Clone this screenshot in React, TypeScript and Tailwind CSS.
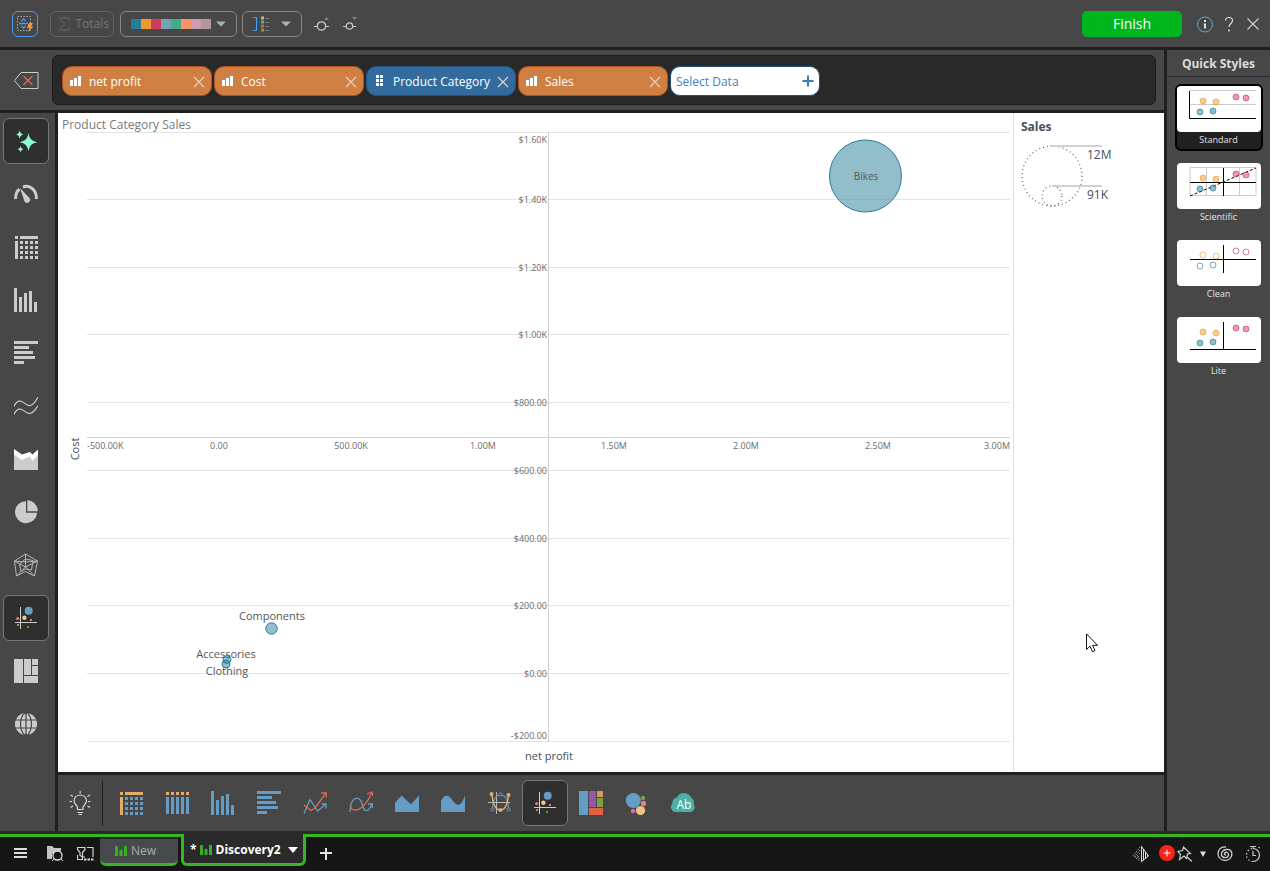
import { useState, type ReactNode } from "react"

const LIGHT = "#cccccc"
const BLUE = "#669dc4"
const ORANGE = "#e3ae6b"

const PALETTE = ["#267e99", "#eb9b30", "#d03b5f", "#75a5b3", "#45aa86", "#f79466", "#cb9cb3", "#b09896"]

type Rect = [number, number, number, number]

function Icon({ children }: { children: ReactNode }) {
  return (
    <svg viewBox="0 0 24 24" className="size-6 shrink-0" fill="none" aria-hidden="true">
      {children}
    </svg>
  )
}

function Rects({ items, fill }: { items: Rect[]; fill: string }) {
  return (
    <>
      {items.map(([x, y, w, h]) => (
        <rect key={`${x}-${y}`} x={x} y={y} width={w} height={h} fill={fill} />
      ))}
    </>
  )
}

const steps = [6, 11, 16, 21]
const gridDots: Rect[] = steps.flatMap((x) => steps.map((y): Rect => [x, y, 3, 3]))
const gridHeads: Rect[] = [
  [1, 1, 3, 3],
  [6, 1, 18, 3],
  [1, 6, 3, 18]
]
const columnBars: Rect[] = [
  [0, 0, 3, 24],
  [5, 9, 3, 15],
  [10, 5, 3, 19],
  [15, 3, 3, 21],
  [20, 14, 3, 10]
]
const rowBars: Rect[] = [
  [0, 0, 24, 3],
  [0, 5, 15, 3],
  [0, 10, 19, 3],
  [0, 15, 21, 3],
  [0, 20, 10, 3]
]

function GridIcon({ head = LIGHT, dots = LIGHT }: { head?: string; dots?: string }) {
  return (
    <Icon>
      <Rects items={gridHeads} fill={head} />
      <Rects items={gridDots} fill={dots} />
    </Icon>
  )
}

function ScatterIcon() {
  return (
    <Icon>
      <path d="M6.5 1v22M1 16.5h22" stroke={LIGHT} />
      <circle cx="14.7" cy="4.7" r="4" fill={BLUE} />
      <circle cx="10.4" cy="11.7" r="2.2" fill="#eccb7c" />
      <circle cx="3.7" cy="12.5" r="1.6" fill="#e57e74" />
      <rect x="16" y="13" width="2" height="2" fill="#e57e74" />
      <rect x="3" y="18" width="2" height="2" fill="#c58a3c" />
      <rect x="13" y="20" width="2" height="2" fill="#6c9140" />
    </Icon>
  )
}

function TreemapIcon({ colors }: { colors: string[] }) {
  return (
    <Icon>
      <rect width="9" height="24" fill={colors[0]} />
      <rect x="10" width="7" height="16" fill={colors[1]} />
      <rect x="18" width="6" height="6" fill={colors[2]} />
      <rect x="18" y="7" width="6" height="9" fill={colors[3]} />
      <rect x="10" y="17" width="14" height="7" fill={colors[4]} />
    </Icon>
  )
}

const sideTools: { name: string; icon: ReactNode }[] = [
  {
    name: "Smart visual",
    icon: (
      <Icon>
        <g fill="#8dffcf">
          <path d="M14.5 4C15.6 9.8 17.4 12 23.5 13.2C17.4 14.4 15.6 16.5 14.5 22.3C13.4 16.5 11.5 14.4 5.5 13.2C11.5 12 13.4 9.8 14.5 4Z" />
          <path d="M5.7 1.3C6.3 4 7 4.8 9.5 5.5C7 6.2 6.3 7 5.7 9.5C5.1 7 4.4 6.2 2 5.5C4.4 4.8 5.1 4 5.7 1.3Z" />
          <path d="M6.5 17C7 19 7.6 19.7 9.5 20.2C7.6 20.7 7 21.4 6.5 23.5C6 21.4 5.4 20.7 3.5 20.2C5.4 19.7 6 19 6.5 17Z" />
        </g>
      </Icon>
    )
  },
  {
    name: "Gauge",
    icon: (
      <Icon>
        <path d="M1.5 17C1.5 12 3 9 5.5 7.3M9 5C16 2.5 22.5 8 22.5 17" stroke={LIGHT} strokeWidth="3" />
        <path d="M6 6L15.5 16A3 3 0 1 1 10.5 19.5Z" fill={LIGHT} />
      </Icon>
    )
  },
  { name: "Grid", icon: <GridIcon /> },
  {
    name: "Column chart",
    icon: (
      <Icon>
        <Rects items={columnBars} fill={LIGHT} />
      </Icon>
    )
  },
  {
    name: "Bar chart",
    icon: (
      <Icon>
        <Rects items={rowBars} fill={LIGHT} />
      </Icon>
    )
  },
  {
    name: "Line chart",
    icon: (
      <Icon>
        <path
          d="M0 12.5C2 8 4 6.5 7 7.3C11 8.5 12.5 12 16 11.5C20 11 21.5 7 24 3.3M0 20.5C2 16 4 14.5 7 15.3C11 16.5 12.5 20 16 19.5C20 19 21.5 15 24 11.8"
          stroke={LIGHT}
          strokeWidth="1.2"
        />
      </Icon>
    )
  },
  {
    name: "Area chart",
    icon: (
      <Icon>
        <path d="M0 5L8 11L16 8L18 12L24 6V23H0Z" fill={LIGHT} />
        <path d="M0 2L8 7.5L16 5L18.5 7.5L24 2.5V8L18.3 14L16 9.5L8 13L0 7.5Z" fill="#fff" />
      </Icon>
    )
  },
  {
    name: "Pie chart",
    icon: (
      <Icon>
        <path d="M12 1.2A11 11 0 1 0 23 12.7H12Z" fill={LIGHT} />
        <path d="M13.3 0.3A10.8 10.8 0 0 1 23.8 11.3H13.3Z" fill={LIGHT} />
      </Icon>
    )
  },
  {
    name: "Radar chart",
    icon: (
      <Icon>
        <g stroke="#b5b5b5" strokeWidth="1">
          <path d="M11.5 1L23.5 8L20.5 23L11.5 18.5L2.5 23L0.5 8Z" />
          <path d="M11.5 6L19 7.5L17.5 17L11.5 16L7 18.5L5.5 11Z" />
          <path d="M11.5 1V14L23.5 8M11.5 14L20.5 23M11.5 14L2.5 23M11.5 14L0.5 8M0.5 8L11.5 9L23.5 8" />
        </g>
      </Icon>
    )
  },
  { name: "Scatter chart", icon: <ScatterIcon /> },
  { name: "Treemap", icon: <TreemapIcon colors={[LIGHT, LIGHT, LIGHT, LIGHT, LIGHT]} /> },
  {
    name: "Map",
    icon: (
      <Icon>
        <circle cx="12" cy="12" r="11" fill={LIGHT} />
        <g stroke="#474747" strokeWidth="1.2">
          <ellipse cx="12" cy="12" rx="5.5" ry="11" />
          <path d="M12 1V23M1 8H23M1 16H23" />
        </g>
      </Icon>
    )
  }
]

const visualTools: { name: string; icon: ReactNode }[] = [
  { name: "Matrix grid", icon: <GridIcon head={ORANGE} dots={BLUE} /> },
  {
    name: "Table",
    icon: (
      <Icon>
        <Rects items={[1, 6, 11, 16, 21].map((x): Rect => [x, 1, 3, 3])} fill={ORANGE} />
        <Rects items={[1, 6, 11, 16, 21].map((x): Rect => [x, 6, 3, 17])} fill={BLUE} />
      </Icon>
    )
  },
  {
    name: "Columns",
    icon: (
      <Icon>
        <Rects items={columnBars} fill={BLUE} />
      </Icon>
    )
  },
  {
    name: "Bars",
    icon: (
      <Icon>
        <Rects items={rowBars} fill={BLUE} />
      </Icon>
    )
  },
  {
    name: "Lines",
    icon: (
      <Icon>
        <path d="M1 22.5L7 8.5L14.5 20L23 13M18.5 13H23V17.5" stroke={BLUE} strokeWidth="1.3" />
        <path d="M1 14L8 19.5L12 17L23 2M18 2H23.3V6.5" stroke="#dd6c55" strokeWidth="1.3" />
      </Icon>
    )
  },
  {
    name: "Splines",
    icon: (
      <Icon>
        <path d="M1 21C1 5 11 4 13 12.5C15 22 19 22 23 13M19 13H23.3V17" stroke={BLUE} strokeWidth="1.3" />
        <path d="M2 15C1 20 9 20 12 17C17 13 20 8 23 1.5M18 3L23 1L24 5" stroke="#dd6c55" strokeWidth="1.3" />
      </Icon>
    )
  },
  {
    name: "Area",
    icon: (
      <Icon>
        <path d="M0 12L6.5 4.5L16 13.5L24 4.5V21H0Z" fill={BLUE} />
      </Icon>
    )
  },
  {
    name: "Spline area",
    icon: (
      <Icon>
        <path d="M0 10C3 3.5 7 3 10.5 8C14 13.5 18 16 21 11C22.3 9 23 6.5 24 4.5V21H0Z" fill={BLUE} />
      </Icon>
    )
  },
  {
    name: "Point chart",
    icon: (
      <Icon>
        <path d="M9.5 1V23M1 11.5H23" stroke="#b8b8b8" />
        <path d="M5.5 18C6 9 9 4 13.5 4C18 4 21 9 21.5 18" stroke={BLUE} strokeWidth="1.2" />
        <path d="M5 4C6 13 9 19 13.5 19C18 19 20.5 13 21.5 4" stroke={ORANGE} strokeWidth="1.5" />
        <g fill={ORANGE}>
          <circle cx="4.5" cy="3" r="2" />
          <circle cx="13.5" cy="19" r="2" />
          <circle cx="21.5" cy="4" r="2" />
        </g>
        <g stroke={BLUE} fill="#474747">
          <circle cx="13.5" cy="3.5" r="1.6" />
          <circle cx="5.5" cy="18.5" r="1.6" />
          <circle cx="21.5" cy="18.5" r="1.6" />
        </g>
      </Icon>
    )
  },
  { name: "Scatter", icon: <ScatterIcon /> },
  { name: "Tree", icon: <TreemapIcon colors={[BLUE, "#9559a3", "#d29c54", "#7ca044", "#e4603f"]} /> },
  {
    name: "Packed bubbles",
    icon: (
      <Icon>
        <circle cx="8.3" cy="9.5" r="7.5" fill={BLUE} />
        <circle cx="18" cy="7" r="2.2" fill="#7ca044" />
        <circle cx="18.5" cy="12.5" r="2.7" fill="#e8836f" />
        <circle cx="15.5" cy="19.5" r="4.6" fill="#ebc588" />
        <circle cx="8" cy="20" r="2.2" fill="#dd68bd" />
      </Icon>
    )
  },
  {
    name: "Word cloud",
    icon: (
      <Icon>
        <path d="M4 21A5 5 0 0 1 1.5 12.5A5 5 0 0 1 6 6.5A8 8 0 0 1 20.5 7A5 5 0 0 1 22.5 13A5 5 0 0 1 20 21Z" fill="#4bb1a6" />
        <text x="13" y="18" textAnchor="middle" fontSize="12" fill="#fff">
          Ab
        </text>
      </Icon>
    )
  }
]

const chips = [
  { label: "net profit", measure: true },
  { label: "Cost", measure: true },
  { label: "Product Category", measure: false },
  { label: "Sales", measure: true }
]

function Chip({ label, measure }: { label: string; measure: boolean }) {
  return (
    <div
      className={`flex h-[30px] w-[150px] items-center rounded-[10px] border pr-[5px] pl-[7px] text-white ${
        measure ? "border-[#b4501f] bg-[#d07f43]" : "border-[#24527c] bg-[#346b9e]"
      }`}
    >
      <svg viewBox="0 0 12 12" className="size-3 shrink-0" fill="#fff" aria-hidden="true">
        {measure ? (
          <path d="M0 5h3v6H0zM4 3h3v8H4zM8 1h3v10H8z" />
        ) : (
          <path d="M2 0h3v3H2zM6 0h3v3H6zM2 4h3v3H2zM6 4h3v3H6zM2 8h3v3H2zM6 8h3v3H6z" />
        )}
      </svg>
      <span className="ml-[7px] flex-1 pt-0.5 whitespace-nowrap">{label}</span>
      <button type="button" aria-label={`Remove ${label}`} className="flex">
        <svg viewBox="0 0 14 14" className="size-3.5" stroke="#e6cfc0" strokeWidth="1.2" aria-hidden="true">
          <path d="M2 3l10 10M12 3L2 13" />
        </svg>
      </button>
    </div>
  )
}

function TopBar() {
  return (
    <header className="flex h-[50px] items-center border-b-3 border-[#202020] px-3">
      <button
        type="button"
        aria-label="Auto update"
        className="flex size-[26px] items-center justify-center rounded-md border border-[#4f9be8]"
      >
        <svg viewBox="0 0 18 18" className="size-[18px]" fill="none" aria-hidden="true">
          <rect x="1.5" y="1.5" width="13" height="14" stroke="#aaa" strokeDasharray="1.5 1.5" />
          <path d="M3 8.500h9M5.500 6L7.500 4L9.500 6M5.500 11L7.500 13L9.500 11" stroke="#4f9be8" strokeWidth="1.3" />
          <path d="M13 8h4l-2 3.500h2.500L12 17l1.500-4H11z" fill="#f5a02c" />
        </svg>
      </button>
      <button
        type="button"
        disabled
        className="ml-3 flex h-[26px] w-16 items-center justify-between rounded-md border border-[#636363] pr-1 pl-[7px] text-[#777]"
      >
        <svg viewBox="0 0 12 14" className="h-3.5 w-3" fill="none" stroke="#6b6b6b" aria-hidden="true">
          <path d="M11 3V1H1L6.500 7L1 13H11V11" />
        </svg>
        Totals
      </button>
      <button
        type="button"
        aria-label="Colour palette"
        className="ml-1.5 flex h-[26px] w-[117px] items-center rounded-md border border-[#858585] pl-2.5"
      >
        <span className="flex">
          {PALETTE.map((color) => (
            <span key={color} className="h-2.5 w-2.5" style={{ backgroundColor: color }} />
          ))}
        </span>
        <svg viewBox="0 0 10 6" className="ml-[5px] h-1.5 w-2.5" fill="#b0b0b0" aria-hidden="true">
          <path d="M0 0.500h10L5 5.500z" />
        </svg>
      </button>
      <button
        type="button"
        aria-label="Legend position"
        className="ml-[5px] flex h-[26px] w-[60px] items-center justify-between rounded-md border border-[#858585] px-2.5"
      >
        <svg viewBox="0 0 16 16" className="size-4" fill="none" aria-hidden="true">
          <path d="M0 1.500H3.500V14.500H0" stroke="#3fa9f5" />
          <path d="M8 0.500h3v3H8z" fill="#e3ae6b" />
          <path d="M8 4.500h3v3H8z" fill="#45b5a4" />
          <path d="M8 8.500h3v3H8z" fill="#e4603f" />
          <path d="M8 12.500h3v3H8z" fill="#7ca044" />
          <path d="M12 2.500h4M12 6.500h4M12 10.500h4M12 14.500h4" stroke="#777" />
        </svg>
        <svg viewBox="0 0 10 6" className="h-1.5 w-2.5" fill="#b0b0b0" aria-hidden="true">
          <path d="M0 0.500h10L5 5.500z" />
        </svg>
      </button>
      <button type="button" aria-label="Increase marker size" className="ml-3">
        <svg viewBox="0 0 16 18" className="h-[18px] w-4" fill="none" aria-hidden="true">
          <circle cx="7.500" cy="11" r="4.200" stroke="#ccc" strokeWidth="1.2" />
          <path d="M0 11.500h3M12 11.500h3" stroke="#ccc" />
          <path d="M10 5L12.500 2L15 5z" fill="#3f93cf" />
        </svg>
      </button>
      <button type="button" aria-label="Decrease marker size" className="ml-3">
        <svg viewBox="0 0 16 18" className="h-[18px] w-4" fill="none" aria-hidden="true">
          <circle cx="7.500" cy="11" r="3.200" stroke="#ccc" strokeWidth="1.2" />
          <path d="M1 11.500h3M11 11.500h3" stroke="#ccc" />
          <path d="M10 2h5L12.500 5z" fill="#3f93cf" />
        </svg>
      </button>
      <div className="ml-auto flex items-center gap-2">
        <button type="button" className="mr-1.5 h-[26px] w-[100px] rounded-[5px] bg-[#00b61f] text-sm text-white">
          Finish
        </button>
        <button type="button" aria-label="Information">
          <svg viewBox="0 0 18 18" className="size-[18px]" fill="none" aria-hidden="true">
            <circle cx="9" cy="9.500" r="7.500" stroke="#6ba6cf" />
            <path d="M8 5h2v2H8zM7.500 8.500H10v5H8V9.500h-.5z" fill="#ddd" />
          </svg>
        </button>
        <button type="button" aria-label="Help" className="mx-0.5">
          <svg viewBox="0 0 10 16" className="h-4 w-2.5" fill="none" aria-hidden="true">
            <path d="M1.500 4.500C1.500 0.500 8.500 0.500 8.500 4.500C8.500 7.500 5 7.500 5 11" stroke="#ddd" strokeWidth="1.200" />
            <circle cx="5" cy="14.500" r="1" fill="#ddd" />
          </svg>
        </button>
        <button type="button" aria-label="Close">
          <svg viewBox="0 0 18 14" className="-mr-1 h-3.5 w-[18px]" stroke="#ccc" strokeWidth="1.2" aria-hidden="true">
            <path d="M3.500 1.500l11 11M14.500 1.500l-11 11" />
          </svg>
        </button>
      </div>
    </header>
  )
}

function DataBar() {
  return (
    <div className="flex h-[63px] items-center border-b-3 border-[#202020] pr-2">
      <button type="button" aria-label="Clear all" className="flex w-[52px] justify-center">
        <svg viewBox="0 0 26 18" className="h-[18px] w-[26px]" fill="none" aria-hidden="true">
          <path d="M1.500 9.500L8 1.500H25V17.500H8Z" stroke="#ccc" />
          <path d="M10.500 5l9 9M19.500 5l-9 9" stroke="#e2705a" strokeWidth="1.2" />
        </svg>
      </button>
      <div className="flex h-[50px] flex-1 items-center gap-0.5 rounded-md border border-[#1d1d1d] bg-[#292929] px-[9px] pt-0.5">
        {chips.map((chip) => (
          <Chip key={chip.label} {...chip} />
        ))}
        <button
          type="button"
          className="flex h-[30px] w-[150px] items-center justify-between rounded-[10px] border border-[#24527c] bg-white px-[5px] text-[#3d85bd]"
        >
          <span className="pt-0.5">Select Data</span>
          <svg viewBox="0 0 12 12" className="size-3" stroke="#3d7fb5" strokeWidth="2" aria-hidden="true">
            <path d="M6 .5v11M.5 6h11" />
          </svg>
        </button>
      </div>
    </div>
  )
}

const yTicks = [
  { label: "$1.60K", y: 132.5, textY: 143 },
  { label: "$1.40K", y: 199.5, textY: 203 },
  { label: "$1.20K", y: 267.5, textY: 271 },
  { label: "$1.00K", y: 334.5, textY: 338 },
  { label: "$800.00", y: 402.5, textY: 406 },
  { label: "$600.00", y: 470.5, textY: 474 },
  { label: "$400.00", y: 538.5, textY: 542 },
  { label: "$200.00", y: 605.5, textY: 609 },
  { label: "$0.00", y: 673.5, textY: 677 },
  { label: "-$200.00", y: 741.5, textY: 739 }
]

const xTicks: { label: string; x: number; anchor: "start" | "middle" | "end" }[] = [
  { label: "-500.00K", x: 87, anchor: "start" },
  { label: "0.00", x: 219, anchor: "middle" },
  { label: "500.00K", x: 351, anchor: "middle" },
  { label: "1.00M", x: 483, anchor: "middle" },
  { label: "1.50M", x: 614, anchor: "middle" },
  { label: "2.00M", x: 746, anchor: "middle" },
  { label: "2.50M", x: 878, anchor: "middle" },
  { label: "3.00M", x: 1010, anchor: "end" }
]

const bubbles = [
  { label: "Bikes", x: 865.5, y: 176, r: 36, textX: 866, textY: 180 },
  { label: "Components", x: 271.5, y: 628.5, r: 5.7, textX: 272, textY: 620 },
  { label: "Accessories", x: 227, y: 659.5, r: 4, textX: 226, textY: 658 },
  { label: "Clothing", x: 226, y: 664, r: 4, textX: 227, textY: 675 }
]

function BubbleChart() {
  return (
    <section className="flex min-w-0 flex-1 flex-col">
      <h1 className="h-[18px] pt-1 pl-1 leading-4 text-[#7a7a7a]">Product Category Sales</h1>
      <svg viewBox="58 131 955 641" className="w-full flex-1" role="img" aria-label="Product Category Sales">
        {yTicks.map((tick) => (
          <path key={tick.label} d={`M87 ${tick.y}H1010`} stroke="#e4e4e4" />
        ))}
        <path d="M87 437.500H1010M548.500 132V742" stroke="#cfcfcf" />
        <g fontSize="9" fill="#6b6b6b">
          {yTicks.map((tick) => (
            <text key={tick.label} x="547" y={tick.textY} textAnchor="end">
              {tick.label}
            </text>
          ))}
          {xTicks.map((tick) => (
            <text key={tick.label} x={tick.x} y="449" textAnchor={tick.anchor}>
              {tick.label}
            </text>
          ))}
        </g>
        {bubbles.map((b) => (
          <circle key={b.label} cx={b.x} cy={b.y} r={b.r} fill="#267e99" fillOpacity="0.5" stroke="#267e99" />
        ))}
        <g fontSize="11" fill="#555" textAnchor="middle">
          {bubbles.map((b) => (
            <text key={b.label} x={b.textX} y={b.textY} fontSize={b.label === "Bikes" ? 10 : 11}>
              {b.label}
            </text>
          ))}
          <text x="549" y="760" fill="#45515c">
            net profit
          </text>
          <text transform="translate(79 449) rotate(-90)" fill="#45515c">
            Cost
          </text>
        </g>
      </svg>
    </section>
  )
}

function SizeLegend() {
  return (
    <aside className="relative w-[151px] shrink-0 border-l border-[#e2e2e2] pt-1.5 pl-[7px] text-[#45515c]">
      <h2 className="leading-4 font-bold">Sales</h2>
      <svg viewBox="0 0 100 72" className="mt-1 h-[72px] w-[100px]" fill="none" aria-label="Bubble size">
        <g stroke="#667079" strokeDasharray="1 3" strokeWidth="1.3">
          <circle cx="31" cy="37" r="30" />
          <circle cx="31" cy="57" r="10" />
        </g>
        <path d="M29 7h52M31 47h50" stroke="#cfd3d6" strokeWidth="2" />
        <g fontSize="12" fill="#45515c">
          <text x="66" y="20">
            12M
          </text>
          <text x="66" y="60">
            91K
          </text>
        </g>
      </svg>
      <svg viewBox="0 0 13 20" className="absolute top-[520px] left-[72px] h-5 w-[13px]" aria-hidden="true">
        <path d="M.5.8V16.500L4 13.200L6.500 18.800L9 17.600L6.600 12.300H11.500Z" fill="#fff" stroke="#111" />
      </svg>
    </aside>
  )
}

function StyleDots({ hollow = false }: { hollow?: boolean }) {
  const dots = [
    [26, 15, "#eb9b30"],
    [39, 16, "#eb9b30"],
    [59, 11, "#d03b5f"],
    [69, 12, "#d03b5f"],
    [23, 26, "#267e99"],
    [36, 25, "#267e99"]
  ] as const
  return (
    <>
      {dots.map(([x, y, color]) => (
        <circle
          key={`${x}-${y}`}
          cx={x}
          cy={y}
          r="3"
          fill={color}
          fillOpacity={hollow ? 0 : 0.5}
          stroke={color}
          strokeOpacity="0.65"
        />
      ))}
    </>
  )
}

const quickStyles: { name: string; lines: ReactNode; hollow?: boolean }[] = [
  {
    name: "Standard",
    lines: (
      <>
        <path d="M13 4.500H79M13 18.500H79" stroke="#ccc" />
        <path d="M12.500 5V32.500H79" stroke="#000" />
      </>
    )
  },
  {
    name: "Scientific",
    lines: (
      <>
        <path d="M13 4.500H79V32.500H13ZM29.500 4V32M62.500 4V32" stroke="#ccc" />
        <path d="M13 19.500H79M46.500 5V33" stroke="#000" />
        <path d="M13 33L79 5" stroke="#000" strokeDasharray="3 2" />
      </>
    )
  },
  { name: "Clean", hollow: true, lines: <path d="M13 19.500H79M46.500 5V33" stroke="#000" /> },
  { name: "Lite", lines: <path d="M13 32.500H79M46.500 5V32" stroke="#000" /> }
]

function QuickStyles() {
  const [selected, setSelected] = useState("Standard")
  return (
    <aside className="w-[106px] shrink-0 border-l-3 border-[#202020]">
      <h2 className="h-[27px] border-b border-[#2b2b2b] text-center leading-7 font-bold text-[#ddd]">Quick Styles</h2>
      <div className="flex flex-col items-center gap-2.5 pt-[7px]">
        {quickStyles.map((style) => (
          <button
            key={style.name}
            type="button"
            onClick={() => setSelected(style.name)}
            className={`w-[88px] rounded-md border-2 text-[9px] text-[#e4e4e4] ${
              selected === style.name ? "border-black bg-[#202020]" : "border-transparent"
            }`}
          >
            <svg viewBox="0 0 84 46" className="h-[46px] w-full rounded-[4px] bg-white" fill="none" aria-hidden="true">
              {style.lines}
              <StyleDots hollow={style.hollow} />
            </svg>
            <span className="block h-[17px] leading-4">{style.name}</span>
          </button>
        ))}
      </div>
    </aside>
  )
}

function ToolButton({ name, icon, active }: { name: string; icon: ReactNode; active: boolean }) {
  return (
    <button
      type="button"
      aria-label={name}
      className={`flex size-[46px] items-center justify-center rounded-md border ${
        active ? "border-[#777] bg-[#2f2f2f]" : "border-transparent"
      }`}
    >
      {icon}
    </button>
  )
}

function VisualBar() {
  return (
    <div className="flex h-[59px] items-center border-t-3 border-[#202020]">
      <button type="button" aria-label="Suggestions" className="flex w-11 justify-center">
        <Icon>
          <g stroke="#d8d8d8" strokeWidth="1.2">
            <path d="M9.500 18.500V16.500C9.500 14.500 6 13 6 9.500A6.300 6.300 0 0 1 18.500 9.500C18.500 13 15 14.500 15 16.500V18.500Z" />
            <path d="M9.500 21.500H15M10.500 23.500H14M12.200 0V2.500M1.500 10.500H4M20 10.500H22.500M2.500 4L5 5.500M22 4L19.500 5.500M2.500 16.500L5 15M22 16.500L19.500 15" />
          </g>
        </Icon>
      </button>
      <div className="mr-[5px] h-[45px] w-px bg-[#202020]" />
      {visualTools.map((tool) => (
        <ToolButton key={tool.name} {...tool} active={tool.name === "Scatter"} />
      ))}
    </div>
  )
}

function TabBars() {
  return (
    <svg viewBox="0 0 12 12" className="size-3 shrink-0" fill="#3aad24" aria-hidden="true">
      <path d="M0 1h3v10H0zM4.500 5h3v6h-3zM9 1h3v10H9z" />
    </svg>
  )
}

function Footer() {
  return (
    <footer className="border-t-3 border-[#2a2a2a] bg-[#161616]">
      <div className="flex h-[37px]">
        <div className="flex w-[184px] border-t-3 border-[#35b723]">
          <div className="flex w-[100px] items-center gap-[13px] pl-3.5">
            <button type="button" aria-label="Menu" className="mr-1.5">
              <svg viewBox="0 0 14 12" className="h-3 w-3.5" stroke="#ddd" strokeWidth="2" aria-hidden="true">
                <path d="M0 1h13M0 5h13M0 9h13" />
              </svg>
            </button>
            <button type="button" aria-label="Open">
              <svg viewBox="0 0 17 17" className="size-[17px]" fill="none" aria-hidden="true">
                <path d="M0 0h5l2 2h7v3H9L5 8v5H0z" fill="#c4c4c4" />
                <circle cx="10.500" cy="9.500" r="4.500" stroke="#ddd" strokeWidth="1.300" />
                <path d="M7.500 12.500L5 15M13.500 12.500L16 15" stroke="#ddd" />
              </svg>
            </button>
            <button type="button" aria-label="Filters">
              <svg viewBox="0 0 17 17" className="size-[17px]" fill="none" stroke="#d5d5d5" strokeWidth="1.2" aria-hidden="true">
                <path d="M.5 1.500H8V3.500L5.500 6.500V11L3 9.500V6.500L.5 3.500ZM10 1.500H16V11M.5 9V13.500H5.500V11H8" />
                <path d="M7 13.500h2.500M10.500 13.500H13M14 13.500h2.500" strokeWidth="2" />
              </svg>
            </button>
          </div>
          <button
            type="button"
            className="flex h-[29px] w-[78px] items-center gap-1 rounded-b-md border-t-2 border-b-3 border-t-[#2a2a2a] border-b-[#35b723] bg-[#464a4d] pl-[15px] text-[#aaa]"
          >
            <TabBars />
            New
          </button>
        </div>
        <div className="-ml-[3px] flex h-8 w-[125px] items-center rounded-b-md border-x-3 border-b-3 border-[#35b723] bg-[#2a2a2a] pt-0.5 pl-1.5 font-bold text-white">
          <span className="mr-[3px]">*</span>
          <TabBars />
          <span className="ml-1">Discovery2</span>
          <button type="button" aria-label="Tab options" className="ml-auto pr-[5px]">
            <svg viewBox="0 0 10 6" className="h-1.5 w-2.5" fill="#fff" aria-hidden="true">
              <path d="M0 0h10L5 6z" />
            </svg>
          </button>
        </div>
        <div className="-ml-[3px] flex flex-1 items-center border-t-3 border-[#35b723] pr-[9px] pl-[17px]">
          <button type="button" aria-label="Add tab">
            <svg viewBox="0 0 12 12" className="size-3" stroke="#e5e5e5" strokeWidth="2" aria-hidden="true">
              <path d="M6 0v12M0 5h12" />
            </svg>
          </button>
          <div className="ml-auto flex items-center">
            <button type="button" aria-label="Compare" className="mr-2.5">
              <svg viewBox="0 0 16 16" className="size-4" fill="none" aria-hidden="true">
                <path d="M7 1L0 10L7 15" stroke="#999" strokeDasharray="1.500 1" />
                <path d="M7 4L2 10L7 13M7 7L4 10L7 11" stroke="#999" strokeDasharray="1.500 1" />
                <path d="M8.500 0V16M14.500 8.500V11" stroke="#ddd" />
                <path d="M8.500 0.500L15.500 10L8.500 15.500M10.500 3V14.500M12.500 6V13" stroke="#ddd" />
              </svg>
            </button>
            <span className="mb-[3px] flex size-4 items-center justify-center rounded-full bg-[#fb2318]">
              <svg viewBox="0 0 8 8" className="size-2" stroke="#fff" aria-hidden="true">
                <path d="M4 .5v7M.5 4h7" />
              </svg>
            </span>
            <button type="button" aria-label="Pin" className="ml-0.5">
              <svg viewBox="0 0 16 16" className="size-4" fill="none" stroke="#ccc" strokeWidth="1.2" aria-hidden="true">
                <path d="M6.500 1L13.500 7.500L10.500 8L9.500 12.500L7 10L2.500 13.500L3.500 8.500L1 5.500L5.500 4.500ZM9.500 10.500L15 15.500" />
              </svg>
            </button>
            <button type="button" aria-label="Pin options" className="mr-[11px] ml-[7px]">
              <svg viewBox="0 0 6 6" className="size-1.5" fill="#ddd" aria-hidden="true">
                <path d="M0 .5h6L3 6z" />
              </svg>
            </button>
            <button type="button" aria-label="Refresh" className="mr-3">
              <svg viewBox="0 0 16 16" className="size-4" fill="none" stroke="#ccc" strokeWidth="1.3" aria-hidden="true">
                <path d="M9 1C4 0 1 4 1 8A7 7 0 0 0 14.800 9C15.500 4.500 12 3 9 3.500C5.500 4 4 7 4.500 9C5.300 12.500 11 12.500 11.500 9C11.800 6.500 9 5.500 7.700 7C6.800 8.200 8 9.500 9 8.500" />
              </svg>
            </button>
            <button type="button" aria-label="Schedule">
              <svg viewBox="0 0 16 18" className="h-[18px] w-4" fill="none" stroke="#ccc" strokeWidth="1.2" aria-hidden="true">
                <path d="M8 3.500A6.500 6.500 0 0 1 8 16.500" />
                <path d="M8 16.500A6.500 6.500 0 0 1 8 3.500" strokeDasharray="1.500 2" />
                <path d="M8 6V10.500H11M5 1.500H11M8 1.500V3.500M13.500 2L14.500 3" />
              </svg>
            </button>
          </div>
        </div>
      </div>
    </footer>
  )
}

export default function App() {
  return (
    <div className="flex min-h-screen flex-col bg-[#474747] font-['Open_Sans','Noto_Sans',sans-serif] text-xs">
      <TopBar />
      <div className="flex flex-1">
        <div className="flex min-w-0 flex-1 flex-col">
          <DataBar />
          <div className="flex flex-1">
            <nav className="flex w-[58px] shrink-0 flex-col gap-[7px] border-r-3 border-[#202020] pt-[5px] pl-[3px]">
              {sideTools.map((tool) => (
                <ToolButton
                  key={tool.name}
                  {...tool}
                  active={tool.name === "Smart visual" || tool.name === "Scatter chart"}
                />
              ))}
            </nav>
            <div className="flex min-w-0 flex-1 flex-col">
              <main className="flex flex-1 bg-white">
                <BubbleChart />
                <SizeLegend />
              </main>
              <VisualBar />
            </div>
          </div>
        </div>
        <QuickStyles />
      </div>
      <Footer />
    </div>
  )
}
